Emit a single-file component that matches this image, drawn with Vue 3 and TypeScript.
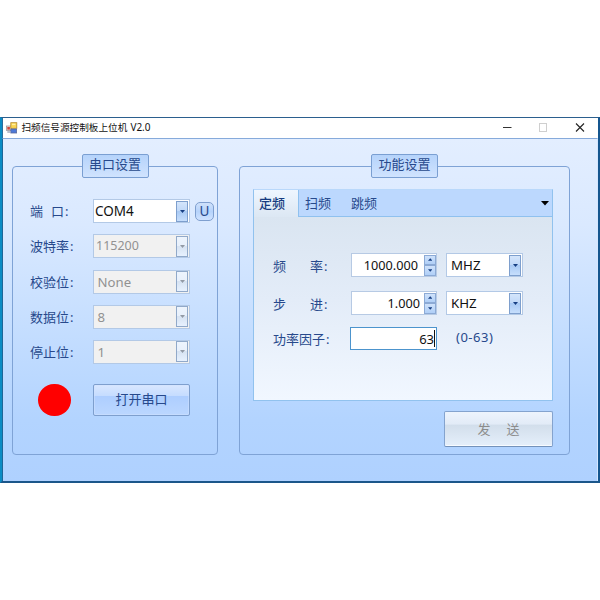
<script setup lang="ts">
import { ref } from 'vue'

interface PortField {
  label: string
  value: string
  enabled: boolean
}

interface RangeField {
  head: string
  tail: string
  value: string
  unit: string
}

const portFields: PortField[] = [
  { label: '端口', value: 'COM4', enabled: true },
  { label: '波特率', value: '115200', enabled: false },
  { label: '校验位', value: 'None', enabled: false },
  { label: '数据位', value: '8', enabled: false },
  { label: '停止位', value: '1', enabled: false },
]

const rangeFields: RangeField[] = [
  { head: '频', tail: '率', value: '1000.000', unit: 'MHZ' },
  { head: '步', tail: '进', value: '1.000', unit: 'KHZ' },
]

const tabs: string[] = ['定频', '扫频', '跳频']
const activeTab = ref<string>('定频')
</script>

<template>
  <main class="screen">
    <div class="window">
      <header class="titlebar">
        <svg class="app-icon" viewBox="0 0 12 12">
          <rect x="0.5" y="4" width="5" height="4.5" fill="#f4d9d0" stroke="#8d8d99" stroke-width="0.7" />
          <rect x="1.3" y="5" width="2.6" height="2.6" fill="#d0453a" />
          <rect x="4.8" y="0.7" width="6" height="5.6" fill="#fbd552" stroke="#b58a2a" stroke-width="0.8" />
          <rect x="6" y="1.8" width="3.4" height="1.3" fill="#fff0a8" />
          <rect x="4.8" y="7" width="5.8" height="4" fill="#4d79d8" stroke="#5a6a9b" stroke-width="0.8" />
          <rect x="1.3" y="9" width="3" height="2" fill="#b9c0cf" />
        </svg>
        <h1 class="title">扫频信号源控制板上位机<span class="version">V2.0</span></h1>
        <svg class="controls" viewBox="0 0 90 20">
          <path d="M3 9.5h8.5" stroke="#333" stroke-width="1" />
          <rect x="39.5" y="5.5" width="7" height="8" fill="none" stroke="#cfcfcf" />
          <path d="M76 5.5l8 8M84 5.5l-8 8" stroke="#222" stroke-width="1.1" fill="none" />
        </svg>
      </header>

      <div class="body">
        <section class="group serial">
          <h2 class="legend">串口设置</h2>
          <div class="port-rows">
            <div v-for="(field, index) in portFields" :key="field.label" class="port-row">
              <span class="label" :class="{ spread: index === 0 }">
                <template v-if="index === 0"><i>端</i><i>口<em>:</em></i></template>
                <template v-else>{{ field.label }}<em>:</em></template>
              </span>
              <div class="combo" :class="{ disabled: !field.enabled, inset: index > 1, wide: index === 0 }">
                <span class="combo-text">{{ field.value }}</span>
                <span class="drop"><svg viewBox="0 0 5 3"><path d="M0 0h5L2.5 3z" /></svg></span>
              </div>
              <button v-if="index === 0" class="refresh">U</button>
            </div>
          </div>
          <div class="open-row">
            <span class="lamp"></span>
            <button class="open">打开串口</button>
          </div>
        </section>

        <section class="group features">
          <h2 class="legend">功能设置</h2>
          <div class="tab-panel">
            <nav class="tabs">
              <button
                v-for="tab in tabs"
                :key="tab"
                class="tab"
                :class="{ active: tab === activeTab }"
                @click="activeTab = tab"
              >{{ tab }}</button>
              <svg class="tab-more" viewBox="0 0 8 5"><path d="M0 0h8L4 4.5z" /></svg>
            </nav>
            <div class="tab-body">
              <div v-for="row in rangeFields" :key="row.unit" class="range-row">
                <span class="range-label"><i>{{ row.head }}</i><i>{{ row.tail }}<em>:</em></i></span>
                <div class="spinner">
                  <span class="spin-text" :class="{ short: row.unit === 'KHZ' }">{{ row.value }}</span>
                  <span class="spin-buttons">
                    <b><svg viewBox="0 0 5 3"><path d="M0 3h5L2.5 0z" /></svg></b>
                    <b><svg viewBox="0 0 5 3"><path d="M0 0h5L2.5 3z" /></svg></b>
                  </span>
                </div>
                <div class="combo unit">
                  <span class="combo-text">{{ row.unit }}</span>
                  <span class="drop"><svg viewBox="0 0 5 3"><path d="M0 0h5L2.5 3z" /></svg></span>
                </div>
              </div>
              <div class="range-row factor">
                <span class="range-label whole"><i>功率因子<em>:</em></i></span>
                <div class="entry">63<span class="caret"></span></div>
                <span class="hint">(0-63)</span>
              </div>
            </div>
          </div>
          <button class="send"><span>发</span><span>送</span></button>
        </section>
      </div>
    </div>
  </main>
</template>

<style>
body {
  margin: 0;
  background: #fff;
}
</style>

<style scoped>
* {
  box-sizing: border-box;
}

.screen {
  width: 600px;
  height: 600px;
  padding-top: 117px;
  overflow: hidden;
  background: #fff;
  font-family: "Noto Sans", "Noto Sans CJK SC", sans-serif;
  font-size: 13px;
  color: #27498c;
}

button {
  font: inherit;
  color: inherit;
  padding: 0;
  margin: 0;
}

i,
em {
  font-style: normal;
}

em {
  margin-left: 1px;
}

.window {
  width: 600px;
  height: 366px;
  border-style: solid;
  border-width: 1px 2px 2px 2px;
  border-color: #2b5f8e #15568f #1b568a #0b8cc4;
  display: flex;
  flex-direction: column;
}

.titlebar {
  height: 20px;
  flex: none;
  display: flex;
  align-items: center;
  border-left: 1px solid #2a6c9c;
  background: #fff;
}

.app-icon {
  width: 12px;
  height: 12px;
  margin: -1px 0 0 3px;
}

.title {
  margin: -2px 0 0 3.5px;
  flex: 1;
  font-size: 9.65px;
  line-height: 18px;
  font-weight: 400;
  color: #111;
  white-space: nowrap;
}

.version {
  margin-left: 3px;
  font-size: 10px;
}

.controls {
  width: 90px;
  height: 20px;
  margin-right: 8px;
}

.body {
  flex: 1;
  display: flex;
  align-items: flex-start;
  padding: 27px 0 0 9px;
  border-top: 1px solid #86aadb;
  border-right: 1px solid #d5e7ff;
  border-left: 1px solid #1d6698;
  background: linear-gradient(#e3eeff 0%, #dae9ff 25%, #c5deff 55%, #b3d4ff 82%, #afd1ff 100%);
}

.group {
  height: 289px;
  border: 1px solid #7fa3d6;
  border-radius: 4px;
  display: flex;
  flex-direction: column;
}

.serial {
  width: 206px;
}

.features {
  width: 331px;
  margin-left: 21px;
}

.legend {
  align-self: center;
  flex: none;
  width: 67px;
  height: 24px;
  margin: -13px 0 0;
  border: 1px solid #7a9fd2;
  border-radius: 2px;
  background: linear-gradient(#b5d3fb, #d0e3fe);
  font-size: 13px;
  line-height: 19px;
  font-weight: 400;
  text-align: center;
}

.port-rows {
  margin-top: 21.2px;
}

.port-row {
  height: 35.2px;
  display: flex;
  align-items: flex-start;
}

.label {
  width: 80px;
  flex: none;
  padding-left: 17px;
  line-height: 25px;
  white-space: nowrap;
}

.spread {
  display: flex;
  gap: 8px;
}

.combo {
  width: 97px;
  height: 24px;
  flex: none;
  display: flex;
  align-items: center;
  padding: 1px;
  border: 1px solid #b3c9e6;
  background: #fff;
  color: #111;
}

.combo-text {
  flex: 1;
  padding-left: 1px;
  font-size: 12.5px;
  line-height: 20px;
}

.wide .combo-text {
  padding-left: 0;
  font-size: 13.5px;
}

.disabled {
  background: #f1f1f1;
  color: #929292;
}

.inset .combo-text {
  padding-left: 2.5px;
  font-size: 13.2px;
}

.drop {
  width: 12px;
  height: 21px;
  flex: none;
  display: flex;
  align-items: center;
  justify-content: center;
  border: 1px solid #7e9fcd;
  background: linear-gradient(#d4e5fb 0%, #c1d9f8 45%, #a9caf4 50%, #c6defc 100%);
}

.drop svg {
  width: 5px;
  height: 3px;
  fill: #173f83;
}

.disabled .drop {
  border-color: #91a9c9;
  background: linear-gradient(#edf4fd 0%, #e8f0fb 45%, #d7e3f2 50%, #e7f1fe 100%);
}

.disabled .drop svg {
  fill: #929aa5;
}

.refresh {
  width: 19px;
  height: 19px;
  margin: 3px 0 0 5px;
  border: 1px solid #7f9fcf;
  border-radius: 5px;
  background: linear-gradient(#cfe1fb, #b6d3fb 50%, #cfe2ff);
  font-size: 13.5px;
  line-height: 17px;
}

.open-row {
  display: flex;
  align-items: flex-start;
  margin-top: 8.8px;
  padding-left: 25px;
}

.lamp {
  width: 32.5px;
  height: 32.5px;
  border-radius: 50%;
  background: #f00;
}

.open {
  width: 97px;
  height: 32px;
  margin-left: 22.5px;
  border: 1px solid #7e9fce;
  border-radius: 2px;
  background: linear-gradient(#d9e7ff 0%, #c5dcff 36%, #aeceff 38%, #bbd7ff 100%);
  box-shadow: inset 0 0 0 1px #cfe2ff80;
  line-height: 29px;
}

.tab-panel {
  width: 300px;
  height: 212px;
  margin: 11px 0 0 13px;
  border: 1px solid #91c2ee;
  border-top-color: #b9d8fb;
  display: flex;
  flex-direction: column;
}

.tabs {
  height: 27px;
  flex: none;
  display: flex;
  align-items: flex-start;
  background: #bcd8fe;
  border-bottom: 1px solid #8fc1ef;
}

.tab {
  height: 26px;
  border: 0;
  padding: 0 0 0 6px;
  width: 46px;
  text-align: left;
  background: transparent;
  line-height: 25px;
}

.tab.active {
  width: 45px;
  height: 27px;
  padding-left: 5px;
  line-height: 23px;
  border-right: 1px solid #8fc1ef;
  background: linear-gradient(#eef6ff, #dce7f3);
  color: #163b80;
  font-weight: 500;
}

.tab-more {
  width: 8px;
  height: 5px;
  margin: 11px 3px 0 auto;
  fill: #000;
}

.tab-body {
  flex: 1;
  padding-top: 36px;
  background: linear-gradient(#dae5f1 0%, #e3ecf8 45%, #f1f7ff 100%);
}

.range-row {
  height: 38px;
  display: flex;
  align-items: flex-start;
}

.range-label {
  width: 97px;
  flex: none;
  display: flex;
  gap: 24px;
  padding-left: 19px;
  line-height: 26px;
  white-space: nowrap;
}

.whole {
  width: 96px;
  line-height: 25px;
}

.spinner {
  width: 86px;
  height: 24px;
  display: flex;
  align-items: center;
  border: 1px solid #b7cae4;
  background: #fff;
  color: #111;
}

.spin-text {
  flex: 1;
  padding-right: 6px;
  text-align: right;
  font-size: 12.7px;
  line-height: 20px;
}

.short {
  padding-right: 4px;
}

.spin-buttons {
  width: 12px;
  height: 21px;
  display: flex;
  flex-direction: column;
}

.spin-buttons b {
  flex: 1;
  display: flex;
  align-items: center;
  justify-content: center;
  border: 1px solid #8caad5;
  background: linear-gradient(#cfe2fb, #b0cff7);
}

.spin-buttons svg {
  width: 4.5px;
  height: 3px;
  fill: #173f83;
}

.unit {
  width: 77px;
  margin-left: 9px;
}

.unit .combo-text {
  padding-left: 3px;
  font-size: 13.3px;
}

.factor {
  margin-top: -2px;
}

.entry {
  width: 87px;
  height: 23px;
  display: flex;
  justify-content: flex-end;
  align-items: center;
  padding-right: 1px;
  border: 1px solid #4c94cd;
  background: #fff;
  color: #111;
  font-size: 13px;
  line-height: 20px;
}

.caret {
  width: 1px;
  height: 17px;
  background: #111;
}

.hint {
  margin-left: 19px;
  font-size: 13px;
  letter-spacing: 0.5px;
  line-height: 21px;
}

.send {
  width: 109px;
  height: 36px;
  margin: 10px 0 0 204px;
  display: flex;
  align-items: center;
  justify-content: center;
  gap: 16px;
  border: 1px solid #84a3ce;
  border-bottom-color: #7492bb;
  border-radius: 2px;
  background: linear-gradient(#edf4fd 0%, #e2ebf7 36%, #d2deeb 38%, #e5effb 100%);
  box-shadow: inset 0 -1px 0 #f8fbff;
  color: #8c8c8c;
  line-height: 30px;
}
</style>
